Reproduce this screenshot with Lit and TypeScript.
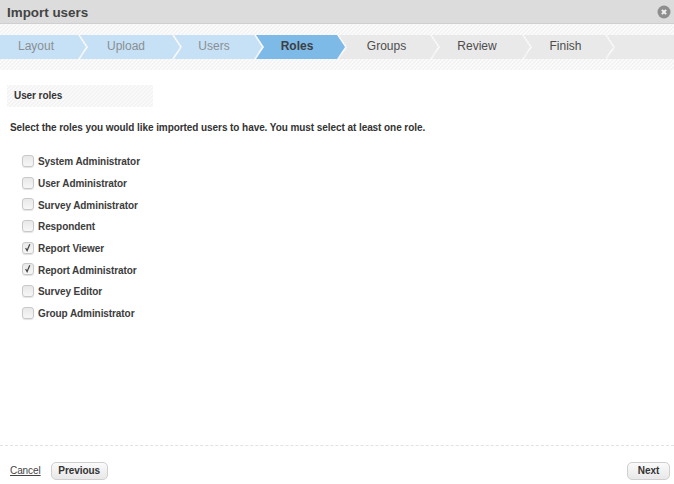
import { LitElement, html, css, svg } from "lit";
import { customElement } from "lit/decorators.js";

const STEPS = [
  { label: "Layout", width: 86, pad: 14, state: "done" },
  { label: "Upload", width: 100, pad: 8, state: "done" },
  { label: "Users", width: 88, pad: 8, state: "done" },
  { label: "Roles", width: 89, pad: 7, state: "active" },
  { label: "Groups", width: 99, pad: 4, state: "todo" },
  { label: "Review", width: 98, pad: 8, state: "todo" },
  { label: "Finish", width: 89, pad: 6, state: "todo" },
  { label: "", width: 67, pad: 0, state: "tail" },
];

const ROLES = [
  { name: "System Administrator", on: false },
  { name: "User Administrator", on: false },
  { name: "Survey Administrator", on: false },
  { name: "Respondent", on: false },
  { name: "Report Viewer", on: true },
  { name: "Report Administrator", on: true },
  { name: "Survey Editor", on: false },
  { name: "Group Administrator", on: false },
];

@customElement("app-root")
export class AppRoot extends LitElement {
  static styles = css`
    :host {
      display: flex;
      flex-direction: column;
      height: 484px;
      width: 674px;
      overflow: hidden;
      background: #fff;
      font-family: "Liberation Sans", Arial, sans-serif;
      color: #333;
    }
    .head {
      height: 23px;
      flex: none;
      display: flex;
      align-items: center;
      justify-content: space-between;
      padding: 0 3px 0 7px;
      background: #dcdcdc;
      border-bottom: 1px solid #cfcfcf;
    }
    .head h1 {
      margin: 1px 0 0;
      font-size: 13.4px;
      font-weight: bold;
      color: #444;
    }
    .close {
      width: 14px;
      height: 14px;
      display: block;
    }
    .strip {
      flex: none;
      height: 46px;
      padding-top: 11px;
      box-sizing: border-box;
      background: repeating-linear-gradient(135deg, #f3f3f3 0 1.414px, #fbfbfb 1.414px 2.828px);
    }
    .steps {
      display: flex;
      height: 24px;
    }
    .step {
      flex: none;
      margin-right: -6px;
      height: 24px;
      line-height: 23px;
      font-size: 12px;
      text-align: center;
      box-sizing: border-box;
      clip-path: polygon(0 0, calc(100% - 8px) 0, 100% 50%, calc(100% - 8px) 100%, 0 100%, 8px 50%);
    }
    .step:first-child {
      clip-path: polygon(0 0, calc(100% - 8px) 0, 100% 50%, calc(100% - 8px) 100%, 0 100%);
    }
    .step:last-child {
      margin-right: 0;
      clip-path: polygon(0 0, 100% 0, 100% 100%, 0 100%, 8px 50%);
    }
    .done { background: #c6e1f5; color: #8a8f93; }
    .active { background: #7ebae8; color: #3d4042; font-weight: bold; }
    .todo { background: #e9e9e9; color: #4d4d4d; }
    .tail { background: #e9e9e9; }
    main {
      flex: 1;
      padding: 15px 0 0 7px;
    }
    .section {
      width: 146px;
      height: 22px;
      line-height: 21px;
      box-sizing: border-box;
      padding-left: 7px;
      font-size: 10px;
      letter-spacing: -0.08px;
      font-weight: bold;
      color: #333;
      background: repeating-linear-gradient(135deg, #f3f3f3 0 1.414px, #fafafa 1.414px 2.828px);
    }
    .intro {
      margin: 14px 0 0 3px;
      font-size: 10px;
      letter-spacing: -0.07px;
      line-height: 13px;
      font-weight: bold;
      color: #333;
    }
    .roles {
      margin: 17px 0 0 15px;
      padding: 0;
      list-style: none;
      display: grid;
      grid-auto-rows: 21.7px;
    }
    .roles li {
      display: flex;
      align-items: center;
      gap: 4px;
      font-size: 10px;
      letter-spacing: -0.08px;
      font-weight: bold;
      color: #3c3c3c;
    }
    .box {
      flex: none;
      width: 10px;
      height: 10px;
      border: 1px solid #c8c8c8;
      border-radius: 3px;
      background: linear-gradient(#e8e8e8, #f7f7f7);
      box-shadow: 0 1px 1px #e4e4e4;
      position: relative;
      top: -1px;
      display: block;
    }
    .box svg { display: block; }
    footer {
      flex: none;
      height: 39px;
      border-top: 1px dashed #e2e2e2;
      box-sizing: border-box;
      display: flex;
      align-items: flex-start;
      padding: 16px 4px 0 10px;
    }
    .cancel {
      font-size: 10px;
      letter-spacing: -0.08px;
      color: #444;
      text-decoration: underline;
      line-height: 18px;
      margin-right: 10px;
    }
    .btn {
      height: 18px;
      box-sizing: border-box;
      border: 1px solid #cfcfcf;
      border-radius: 5px;
      background: linear-gradient(#fafafa, #e8e8e8);
      font: bold 10px/16px "Liberation Sans", Arial, sans-serif;
      letter-spacing: -0.08px;
      color: #333;
      text-align: center;
      padding: 0;
    }
    .prev { width: 57px; }
    .next { width: 43px; margin-left: auto; }
  `;

  render() {
    return html`
      <header class="head">
        <h1>Import users</h1>
        <svg class="close" viewBox="0 0 14 14" aria-label="Close">
          <circle cx="7" cy="7" r="6.5" fill="#8e8e8e"></circle>
          <path d="M4.9 4.9l4.2 4.2M9.1 4.9l-4.2 4.2" stroke="#f2f2f2" stroke-width="2" fill="none"></path>
        </svg>
      </header>
      <nav class="strip">
        <div class="steps">
          ${STEPS.map(
            (s) => html`<div class="step ${s.state}" style="width:${s.width}px;padding-right:${s.pad}px">${s.label}</div>`
          )}
        </div>
      </nav>
      <main>
        <div class="section">User roles</div>
        <p class="intro">
          Select the roles you would like imported users to have. You must select at least one role.
        </p>
        <ul class="roles">
          ${ROLES.map(
            (r) => html`<li>
              <span class="box">
                ${r.on
                  ? svg`<svg width="10" height="10" viewBox="0 0 10 10"><path d="M2.6 5l1.5 2.6L6.8 1.2" stroke="#444" stroke-width="1.2" fill="none"></path></svg>`
                  : ""}
              </span>
              ${r.name}
            </li>`
          )}
        </ul>
      </main>
      <footer>
        <a class="cancel">Cancel</a>
        <button class="btn prev">Previous</button>
        <button class="btn next">Next</button>
      </footer>
    `;
  }
}
